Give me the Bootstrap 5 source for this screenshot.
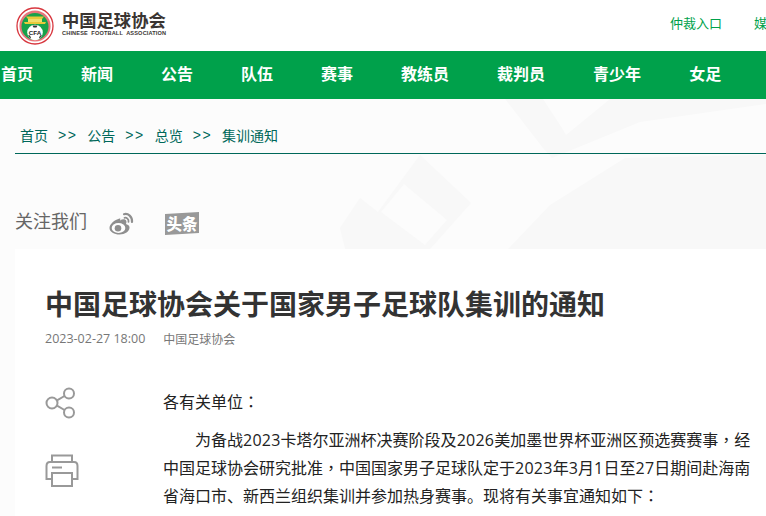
<!DOCTYPE html>
<html lang="zh-CN">
<head>
  <meta charset="UTF-8">
  <title>中国足球协会关于国家男子足球队集训的通知</title>
  <meta name="viewport" content="width=device-width, initial-scale=1">
  <link href="https://cdn.jsdelivr.net/npm/bootstrap@5.3.3/dist/css/bootstrap.min.css" rel="stylesheet">
  <style>
    html, body {
      height: 516px;
      overflow: hidden;
    }
    body {
      font-family: "Noto Sans CJK SC", "Liberation Sans", sans-serif;
      background-color: #fcfcfc;
      color: #333;
    }
    .top-bar {
      height: 51px;
      background-color: #fff;
      padding-left: 16px;
    }
    .logo-name {
      font-size: 17.3px;
      line-height: 20px;
      font-weight: 700;
      color: #3a3532;
      margin-top: -4px;
    }
    .logo-en {
      font-family: "Liberation Sans", sans-serif;
      font-size: 5.6px;
      line-height: 7px;
      font-weight: 700;
      letter-spacing: .15px;
      color: #3a3532;
      white-space: nowrap;
    }
    .top-links {
      width: 766px;
      gap: 32px;
      font-size: 13px;
      white-space: nowrap;
      overflow: hidden;
      padding-left: 670px;
      position: absolute;
      left: 0;
      top: 13px;
    }
    .top-links a {
      color: #00a14b;
      text-decoration: none;
    }
    .main-nav {
      height: 48px;
      background-color: #00a14b;
      padding-left: 1px;
      gap: 48px;
      overflow: hidden;
      white-space: nowrap;
    }
    .main-nav a {
      color: #fff;
      font-size: 16px;
      font-weight: 700;
      line-height: 44px;
      text-decoration: none;
    }
    .page-area {
      position: relative;
      height: 417px;
      overflow: hidden;
    }
    .bg-shapes {
      position: absolute;
      left: 0;
      top: 0;
    }
    .crumbs {
      position: relative;
      height: 55px;
      margin-left: 15px;
      padding-left: 5px;
      padding-top: 26px;
      gap: 10px;
      font-size: 14px;
      line-height: 20px;
      color: #00685a;
      border-bottom: 1px solid #00685a;
    }
    .crumbs span {
      white-space: nowrap;
    }
    .crumbs .sep {
      font-family: "Liberation Sans", sans-serif;
      letter-spacing: 1.5px;
    }
    .follow-row {
      position: relative;
      height: 95px;
      padding-left: 15px;
      padding-top: 53px;
      color: #666;
      font-size: 18px;
      line-height: 26px;
    }
    .weibo-icon {
      margin-left: 22px;
      margin-top: 5px;
    }
    .toutiao-icon {
      margin-left: 31px;
      margin-top: 5px;
    }
    .article-box {
      position: relative;
      margin-left: 15px;
      height: 300px;
      background-color: #fff;
      padding: 34px 15px 0 30px;
    }
    .article-title {
      font-size: 28px;
      line-height: 40px;
      font-weight: 700;
      color: #333;
      margin: 0 0 7px;
      white-space: nowrap;
    }
    .article-meta {
      font-size: 12px;
      line-height: 18px;
      color: #777;
      gap: 18px;
    }
    .article-date {
      font-family: "Open Sans", sans-serif;
      font-size: 12.5px;
    }
    .side-tools {
      width: 118px;
      flex: none;
      gap: 35px;
      padding-top: 39px;
    }
    .article-text {
      font-size: 16px;
      line-height: 28px;
      color: #222;
      padding-top: 39px;
      white-space: nowrap;
    }
    .article-text p {
      margin: 0 0 10px;
    }
    .article-text .indent {
      text-indent: 2em;
    }
    .num {
      font-family: "Open Sans", sans-serif;
      letter-spacing: .25px;
      line-height: 1;
    }
    /* the reference sets these two marks in the middle of the cell */
    .mid-mark {
      font-family: "Noto Sans CJK TC", sans-serif;
      line-height: 1;
    }
  </style>
</head>
<body>

<header class="top-bar d-flex align-items-center position-relative">
  <div class="d-flex align-items-center gap-2">
    <svg width="38" height="38" viewBox="0 0 38 38">
      <circle cx="19" cy="19" r="18" fill="#fff" stroke="#d8373f" stroke-width="1.300"/>
      <circle cx="19" cy="19" r="15.600" fill="#e8767a"/>
      <circle cx="19" cy="19.500" r="13.500" fill="#17a24a"/>
      <path d="M10 9.500h18l-2 2.500H12z" fill="#e8c93a"/>
      <rect x="12" y="12" width="14" height="3" fill="#f1de6a"/>
      <path d="M8 15h22l-1 2H9z" fill="#e8c93a"/>
      <circle cx="19" cy="25.500" r="7.800" fill="#fff"/>
      <path d="M16.500 18.500h5l-1 2h-3zM12 28l2 .5 1 2.500-1 .3zM26 28l-2 .5-1 2.500 1 .3z" fill="#333"/>
      <text x="19" y="28" font-size="6.200" font-weight="700" text-anchor="middle" fill="#222" font-family="Liberation Sans">CFA</text>
    </svg>
    <div>
      <div class="logo-name">中国足球协会</div>
      <div class="logo-en">CHINESE&nbsp; FOOTBALL&nbsp; ASSOCIATION</div>
    </div>
  </div>
  <div class="top-links d-flex">
    <a href="#">仲裁入口</a>
    <a href="#">媒体</a>
  </div>
</header>

<nav class="main-nav d-flex">
  <a href="#">首页</a>
  <a href="#">新闻</a>
  <a href="#">公告</a>
  <a href="#">队伍</a>
  <a href="#">赛事</a>
  <a href="#">教练员</a>
  <a href="#">裁判员</a>
  <a href="#">青少年</a>
  <a href="#">女足</a>
</nav>

<main class="page-area">
  <!-- faint pattern behind the page, coordinates are from y=99 -->
  <svg class="bg-shapes" width="766" height="150" viewBox="0 99 766 150">
    <path fill="#f8f8f8" fill-rule="evenodd" d="M420 155L471 203L430 249H345L340 228L360 198L378 212ZM404 184L381 212L425 245L447 220Z"/>
    <path fill="#f8f8f8" d="M508 249L550 205L625 158L766 155V249Z"/>
    <path fill="#f8f8f8" fill-rule="evenodd" d="M505 99L543 148L552 158L640 122L766 104V99ZM543 99L562 128L566 135L610 99Z"/>
  </svg>

  <div class="crumbs d-flex">
    <span>首页</span>
    <span class="sep">&gt;&gt;</span>
    <span>公告</span>
    <span class="sep">&gt;&gt;</span>
    <span>总览</span>
    <span class="sep">&gt;&gt;</span>
    <span>集训通知</span>
  </div>

  <div class="follow-row d-flex align-items-start">
    <span>关注我们</span>
    <svg class="weibo-icon" width="25" height="23" viewBox="0 0 25 23" fill="none">
      <path d="M10.500 6.500C5.500 8 0.500 12 0.500 16C0.500 20 5.500 22.500 10.500 22.500C16 22.500 20.500 19.500 20.500 15.500C20.500 13 18 12.500 17 12C17.800 10 17.600 8 16 7.500C14.500 7 12.500 7.500 11 8.500C11.500 6.500 11.500 6.200 10.500 6.500Z" fill="#8f8f8f"/>
      <ellipse cx="9.500" cy="16" rx="6.800" ry="5" fill="#fff"/>
      <circle cx="9" cy="16.300" r="3.300" fill="#8f8f8f"/>
      <path d="M15 2.200C19 1 23.500 4.500 23 10" stroke="#8f8f8f" stroke-width="2.200" stroke-linecap="round"/>
      <path d="M15.500 5.800C17.500 5.300 20 7 19.500 9.800" stroke="#8f8f8f" stroke-width="1.800" stroke-linecap="round"/>
    </svg>
    <svg class="toutiao-icon" width="34" height="23" viewBox="0 0 34 23">
      <path d="M0 2L34 0V21L0 23Z" fill="#999"/>
      <text x="17" y="17.500" font-size="15.500" font-weight="900" text-anchor="middle" fill="#fff" font-family="Noto Sans CJK SC">头条</text>
    </svg>
  </div>

  <article class="article-box">
    <h1 class="article-title">中国足球协会关于国家男子足球队集训的通知</h1>
    <div class="article-meta d-flex align-items-center">
      <span class="article-date">2023-02-27 18:00</span>
      <span>中国足球协会</span>
    </div>
    <div class="d-flex">
      <div class="side-tools d-flex flex-column">
        <svg width="32" height="32" viewBox="0 0 32 32" fill="none" stroke="#999" stroke-width="2">
          <circle cx="7" cy="16" r="5.500"/>
          <circle cx="24" cy="6.500" r="5"/>
          <circle cx="24" cy="25.500" r="5"/>
          <path d="M12 13.300L19.500 9M12 18.700L19.500 23"/>
        </svg>
        <svg width="34" height="33" viewBox="0 0 34 33" fill="none" stroke="#999" stroke-width="2">
          <path d="M7 8V1.500H27V8"/>
          <path d="M7 25H1.500V12C1.500 9.500 3 8 5 8H29C31 8 32.500 9.500 32.500 12V25H27"/>
          <rect x="7" y="19" width="20" height="13"/>
          <path d="M7 13.500H17"/>
        </svg>
      </div>
      <div class="article-text">
        <p>各有关单位<span class="mid-mark" lang="zh-TW">：</span></p>
        <p class="indent">为备战<span class="num">2023</span>卡塔尔亚洲杯决赛阶段及<span class="num">2026</span>美加墨世界杯亚洲区预选赛赛事<span class="mid-mark" lang="zh-TW">，</span>经<br>
        中国足球协会研究批准<span class="mid-mark" lang="zh-TW">，</span>中国国家男子足球队定于<span class="num">2023</span>年<span class="num">3</span>月<span class="num">1</span>日至<span class="num">27</span>日期间赴海南<br>
        省海口市、新西兰组织集训并参加热身赛事。现将有关事宜通知如下<span class="mid-mark" lang="zh-TW">：</span></p>
      </div>
    </div>
  </article>
</main>

<script src="https://cdn.jsdelivr.net/npm/bootstrap@5.3.3/dist/js/bootstrap.bundle.min.js"></script>
</body>
</html>
